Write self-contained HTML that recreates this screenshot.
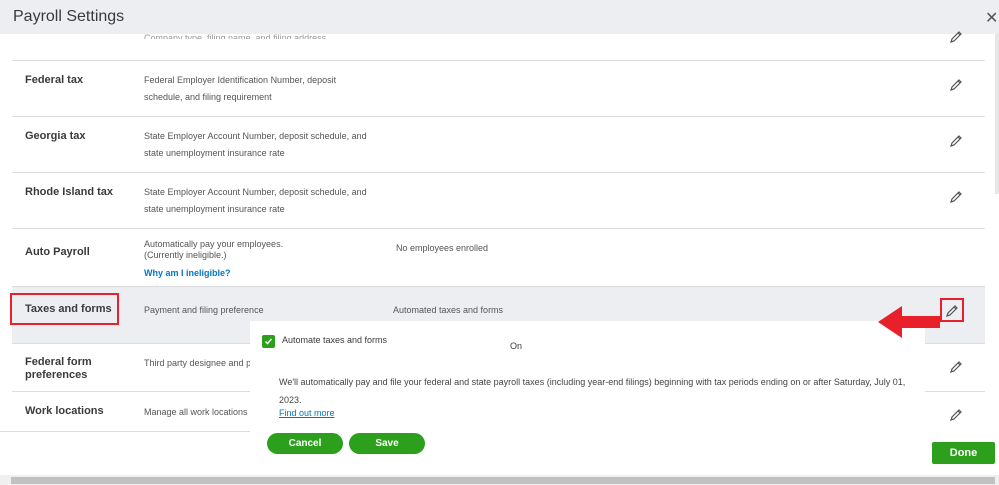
<!DOCTYPE html>
<html><head><style>
*{margin:0;padding:0;box-sizing:border-box}
body{width:999px;height:485px;overflow:hidden;background:#fff;font-family:"Liberation Sans",sans-serif;position:relative;color:#393a3d}
.a{position:absolute}
.hdr{left:0;top:0;width:999px;height:34px;background:#eceef1}
.t{font-size:16px;left:13px;top:8px;color:#393a3d}
.line{height:1px;background:#dcdde0;left:12px;width:973px}
.lab{font-size:11px;font-weight:bold;left:25px;color:#393a3d}
.d{font-size:9px;left:144px;line-height:17px;color:#555}
.pen{width:14px;height:14px}
.btn{background:#2ca01c;color:#fff;font-weight:bold;font-size:10px;text-align:center;border-radius:11px;height:21px;line-height:21px}
</style></head><body>
<div class="a" style="left:12px;top:287px;width:973px;height:56px;background:#eceef1"></div>
<div class="a hdr"></div>
<div class="a t">Payroll Settings</div>
<div class="a" style="left:985px;top:8px;font-size:16px;color:#555">✕</div>
<div class="a" style="left:995px;top:34px;width:4px;height:160px;background:#e6e6e6"></div>

<div class="a d" style="top:34px;line-height:8px;height:5px;overflow:hidden;color:#999">Company type, filing name, and filing address</div>
<div class="a line" style="top:60px"></div>
<div class="a lab" style="top:74px">Federal tax</div>
<div class="a d" style="top:72px">Federal Employer Identification Number, deposit<br>schedule, and filing requirement</div>
<div class="a line" style="top:116px"></div>
<div class="a lab" style="top:130px">Georgia tax</div>
<div class="a d" style="top:128px">State Employer Account Number, deposit schedule, and<br>state unemployment insurance rate</div>
<div class="a line" style="top:172px"></div>
<div class="a lab" style="top:186px">Rhode Island tax</div>
<div class="a d" style="top:184px">State Employer Account Number, deposit schedule, and<br>state unemployment insurance rate</div>
<div class="a line" style="top:228px"></div>
<div class="a lab" style="top:246px">Auto Payroll</div>
<div class="a d" style="top:239px;line-height:11px">Automatically pay your employees.<br>(Currently ineligible.)</div>
<div class="a d" style="top:265px;color:#0077c5;font-weight:bold">Why am I ineligible?</div>
<div class="a d" style="top:240px;left:396px">No employees enrolled</div>
<div class="a line" style="top:286px"></div>
<div class="a" style="left:10px;top:293px;width:109px;height:32px;border:2px solid #e8202a"></div>
<div class="a lab" style="top:303px">Taxes and forms</div>
<div class="a d" style="top:302px">Payment and filing preference</div>
<div class="a d" style="top:302px;left:393px">Automated taxes and forms</div>
<div class="a line" style="top:343px"></div>
<div class="a lab" style="top:356px;line-height:13px">Federal form<br>preferences</div>
<div class="a d" style="top:355px">Third party designee and p</div>
<div class="a line" style="top:391px"></div>
<div class="a lab" style="top:405px">Work locations</div>
<div class="a d" style="top:404px">Manage all work locations</div>
<div class="a" style="left:0;top:431px;width:250px;height:1px;background:#ddd"></div>

<svg class="a pen" style="left:949px;top:30px" viewBox="0 0 14 14"><path d="M2 12l1-3 7-7 2 2-7 7z M9 3l2 2" fill="none" stroke="#555" stroke-width="1.2"/></svg>
<svg class="a pen" style="left:949px;top:78px" viewBox="0 0 14 14"><path d="M2 12l1-3 7-7 2 2-7 7z M9 3l2 2" fill="none" stroke="#555" stroke-width="1.2"/></svg>
<svg class="a pen" style="left:949px;top:134px" viewBox="0 0 14 14"><path d="M2 12l1-3 7-7 2 2-7 7z M9 3l2 2" fill="none" stroke="#555" stroke-width="1.2"/></svg>
<svg class="a pen" style="left:949px;top:190px" viewBox="0 0 14 14"><path d="M2 12l1-3 7-7 2 2-7 7z M9 3l2 2" fill="none" stroke="#555" stroke-width="1.2"/></svg>
<svg class="a pen" style="left:945px;top:304px" viewBox="0 0 14 14"><path d="M2 12l1-3 7-7 2 2-7 7z M9 3l2 2" fill="none" stroke="#555" stroke-width="1.2"/></svg>
<div class="a" style="left:940px;top:298px;width:24px;height:24px;border:2px solid #e8202a"></div>
<svg class="a pen" style="left:949px;top:360px" viewBox="0 0 14 14"><path d="M2 12l1-3 7-7 2 2-7 7z M9 3l2 2" fill="none" stroke="#555" stroke-width="1.2"/></svg>
<svg class="a pen" style="left:949px;top:408px" viewBox="0 0 14 14"><path d="M2 12l1-3 7-7 2 2-7 7z M9 3l2 2" fill="none" stroke="#555" stroke-width="1.2"/></svg>

<div class="a" style="left:250px;top:321px;width:675px;height:149px;background:#fff"></div>
<svg class="a" style="left:878px;top:306px" width="62" height="32" viewBox="0 0 62 32"><path d="M0 16L24 0V10H62V22H24V32Z" fill="#e8202a"/></svg>
<div class="a" style="left:262px;top:335px;width:13px;height:13px;background:#2ca01c;border-radius:2px"></div>
<svg class="a" style="left:264px;top:337px" width="9" height="9" viewBox="0 0 9 9"><path d="M1.5 4.5l2 2 4-4.5" fill="none" stroke="#fff" stroke-width="1.5"/></svg>
<div class="a" style="left:282px;top:335px;font-size:9px">Automate taxes and forms</div>
<div class="a" style="left:510px;top:341px;font-size:9px">On</div>
<div class="a" style="left:279px;top:373px;font-size:9px;line-height:18px;width:640px;color:#444">We'll automatically pay and file your federal and state payroll taxes (including year-end filings) beginning with tax periods ending on or after Saturday, July 01, 2023.</div>
<div class="a" style="left:279px;top:408px;font-size:9px;color:#0077c5;text-decoration:underline">Find out more</div>
<div class="a btn" style="left:267px;top:433px;width:76px">Cancel</div>
<div class="a btn" style="left:349px;top:433px;width:76px">Save</div>
<div class="a btn" style="left:932px;top:442px;width:63px;height:22px;line-height:22px;border-radius:2px;font-size:11px">Done</div>
<div class="a" style="left:0;top:475px;width:999px;height:10px;background:#f0f0f0"></div>
<div class="a" style="left:11px;top:477px;width:984px;height:7px;background:#c1c1c1"></div>
</body></html>
